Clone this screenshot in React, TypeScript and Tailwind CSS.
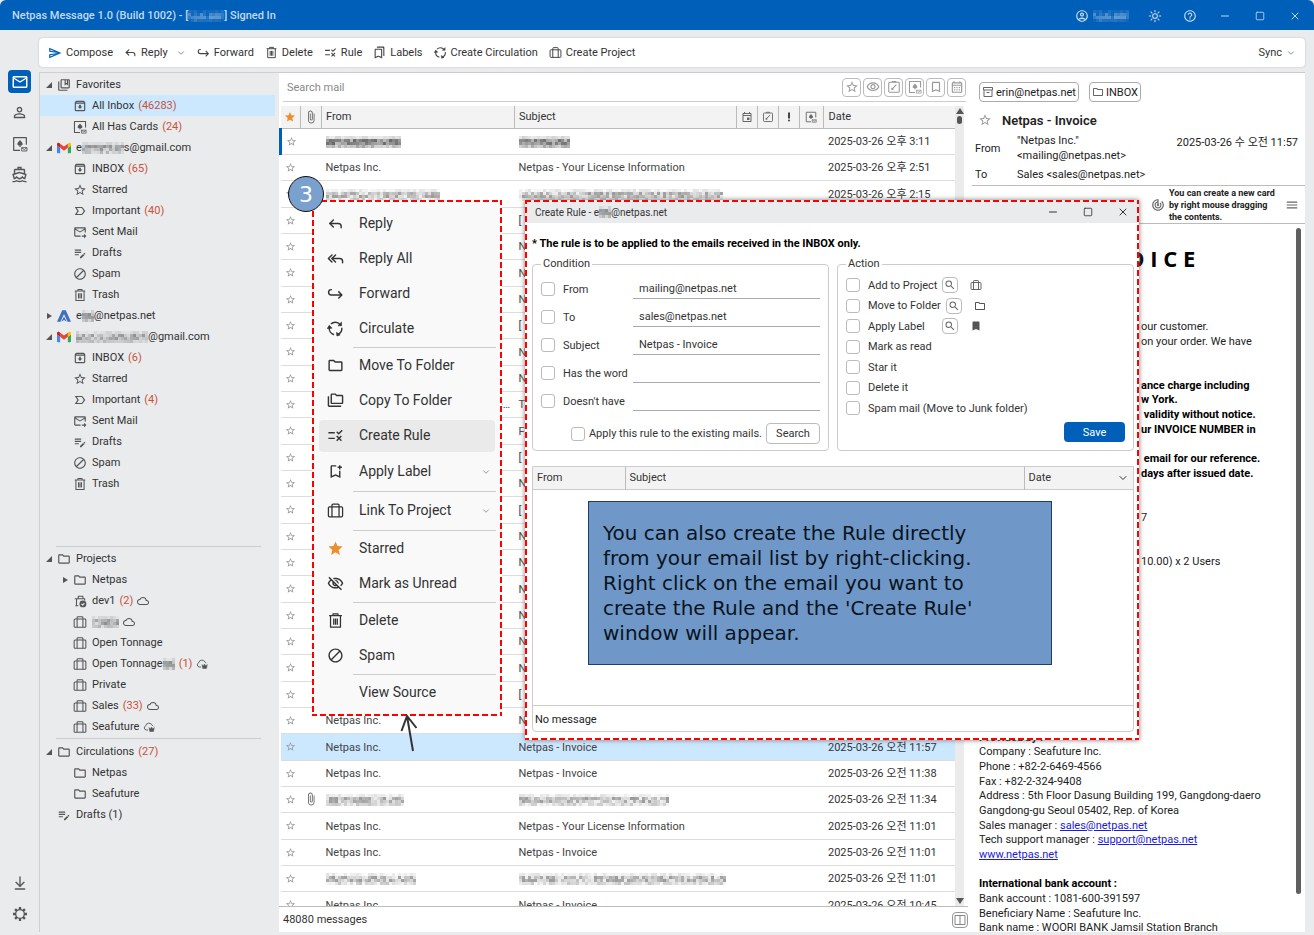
import React, { useState } from 'react';
import { ArrowDownToLine, ChevronDown, Minus, Reply, ReplyAll, Square, X } from 'lucide-react';
import {
    MdAttachFile,
    MdBlock,
    MdBookmark,
    MdBookmarkBorder,
    MdCloudQueue,
    MdHelpOutline,
    MdLabelImportantOutline,
    MdMenu,
    MdOutlineAccountCircle,
    MdOutlineArchive,
    MdOutlineBookmarkAdd,
    MdOutlineBookmarks,
    MdOutlineCalendarMonth,
    MdOutlineCollectionsBookmark,
    MdOutlineDirectionsBoat,
    MdOutlineEditNote,
    MdOutlineEvent,
    MdOutlineFolder,
    MdOutlineFolderCopy,
    MdOutlineForwardToInbox,
    MdOutlineInventory2,
    MdOutlineMail,
    MdOutlineSend,
    MdOutlineVisibility,
    MdOutlineVisibilityOff,
    MdPersonOutline,
    MdPriorityHigh,
    MdRule,
    MdSearch,
    MdStar,
    MdStarBorder,
    MdTrackChanges,
} from 'react-icons/md';

type IconType = React.ComponentType<{ className?: string }>;

/* ---------- Icons ---------- */

const stroke = {
    viewBox: '0 0 24 24',
    fill: 'none',
    stroke: 'currentColor',
    strokeWidth: 1.8,
    strokeLinejoin: 'round' as const,
};

const HookRight: IconType = ({ className }) => (
    <svg {...stroke} strokeWidth={2} className={className}>
        <path d="M7 6.500H6a3.700 3.700 0 0 0 0 7.500h15M16 9l5 5-5 5" />
    </svg>
);

const Suitcase: IconType = ({ className }) => (
    <svg {...stroke} className={className}>
        <rect x="2" y="7" width="20" height="14" rx="1.500" />
        <path d="M7 21V4.500A1.500 1.500 0 0 1 8.500 3h7A1.500 1.500 0 0 1 17 4.500V21" />
    </svg>
);

const SuitcaseCheck: IconType = ({ className }) => (
    <svg {...stroke} className={className}>
        <path d="M9 20H4M6 20V8h-3M6 8h14v3M9 8V4h8v4" />
        <circle cx="17" cy="17" r="5" fill="currentColor" />
        <path d="M14.500 17l2 2 3-3.500" stroke="#e9ebed" />
    </svg>
);

const TrashCan: IconType = ({ className }) => (
    <svg {...stroke} className={className}>
        <path d="M3 5h18M8.500 5V2.500h7V5M5 5v16.500h14V5M9.500 9v9M12 9v9M14.500 9v9" />
    </svg>
);

const CardIcon: IconType = ({ className }) => (
    <svg {...stroke} className={className}>
        <path d="M12 21.500H2.500v-19h19V13" />
        <path
            d="M12 6c1.500 2.500 4 3.500 4 6a2.200 2.200 0 0 1-3.400 1.800L13.500 16h-3l.9-2.200A2.200 2.200 0 0 1 8 12c0-2.500 2.500-3.500 4-6z"
            fill="currentColor"
            stroke="none"
        />
        <path d="M14.500 17.500h8v5h-8zM14.500 17.500l4 3 4-3" strokeWidth="1.300" />
    </svg>
);

const Circulate: IconType = ({ className }) => (
    <svg {...stroke} strokeWidth={2} className={className}>
        <path d="M5.500 5.800a9 9 0 0 1 13 .4M20.900 11a9 9 0 0 1-5.400 9.300M10 20.800A9 9 0 0 1 3.200 11" />
        <path d="M20.500 3v5h-5zM13.500 17.500l.5 5 4.500-1.500zM.5 12l2.700-4.500L7 11.500z" fill="currentColor" strokeWidth="1" />
    </svg>
);

const TaskIcon: IconType = ({ className }) => (
    <svg {...stroke} className={className}>
        <rect x="3" y="4" width="18" height="17" rx="1.500" />
        <path d="M9 4V2.500h6V4M8 16.500l8-8.500M8 16.500l.5-3M8 16.500l3-.5" />
    </svg>
);

const CloudCrown: IconType = ({ className }) => (
    <svg {...stroke} className={className}>
        <path d="M10 18H6a4.500 4.500 0 0 1-.5-8.500A6.500 6.500 0 0 1 18 8.500c1 .2 2 .8 2.500 1.500" />
        <path d="M12 13l3 3 2-4 2.500 4 3-3-1.500 8h-7.500z" fill="currentColor" strokeWidth="1" />
    </svg>
);

const Gear: IconType = ({ className }) => (
    <svg {...stroke} strokeWidth={2} className={className}>
        <circle cx="12" cy="12" r="6.500" />
        <path
            d="M12 5.500V1.500M12 22.500v-4M5.500 12h-4M22.500 12h-4M7.400 7.400L4.600 4.600M19.400 19.400l-2.800-2.800M7.400 16.600l-2.800 2.800M19.400 4.600l-2.800 2.800"
            strokeWidth="3.500"
        />
    </svg>
);

const Sun: IconType = ({ className }) => (
    <svg {...stroke} className={className}>
        <circle cx="12" cy="12" r="4" />
        <path d="M12 1.500v4M12 18.500v4M1.500 12h4M18.500 12h4M4.600 4.600l2.800 2.800M16.600 16.600l2.800 2.800M4.600 19.400l2.800-2.800M16.600 7.400l2.800-2.800" />
    </svg>
);

const GmailLogo: IconType = ({ className }) => (
    <svg viewBox="0 0 24 18" className={className}>
        <path d="M1.600 18h3.800V8.700L0 4.600v11.800C0 17.300.7 18 1.600 18z" fill="#4285f4" />
        <path d="M18.600 18h3.800c.9 0 1.600-.7 1.600-1.600V4.600l-5.400 4.100z" fill="#34a853" />
        <path d="M18.600 1.600v7.100L24 4.600V2.500c0-2-2.300-3.200-3.900-2z" fill="#fbbc04" />
        <path d="M5.400 8.700V1.600L12 6.600l6.600-5v7.100L12 13.700z" fill="#ea4335" />
        <path d="M0 2.500v2.100l5.400 4.100V1.600L3.900.5C2.300-.7 0 .4 0 2.500z" fill="#c5221f" />
    </svg>
);

const NetpasLogo: IconType = ({ className }) => (
    <svg viewBox="0 0 24 20" className={className}>
        <path d="M9 0h6l9 20h-6L12 6.500 6 20H0z" fill="#3f6fc0" />
        <path d="M12 11l4.500 9L12 17l-4.500 3z" fill="#3f6fc0" />
    </svg>
);

const Triangle: React.FC<{ open: boolean }> = ({ open }) => (
    <svg viewBox="0 0 8 8" className="size-2 shrink-0 text-[#555]">
        <path d={open ? 'M7 1v6H1z' : 'M2 1l5 3-5 3z'} fill="currentColor" />
    </svg>
);

// Pixelated block that stands in for private text
const Mosaic: React.FC<{ width: number; dark?: boolean; light?: boolean }> = ({ width, dark, light }) => {
    const base = dark ? 0.45 : light ? 0.2 : 0.22;
    const cells = [];
    for (let x = 0; x < width; x += 3) {
        for (let y = 0; y < 4; y++) {
            const n = Math.abs(Math.sin(x * 12.9 + y * 78.2 + width) * 43758.5) % 1;
            const edge = y === 0 ? 0.3 : y === 3 ? 0.6 : 1;
            cells.push(
                <rect key={`${x}-${y}`} x={x} y={y * 3} width="3" height="3" opacity={(base + (n - 0.4) * 0.4) * edge} />
            );
        }
    }
    return (
        <svg width={width} height="12" className="inline-block shrink-0 align-middle" fill={light ? '#ffffff' : '#222222'}>
            {cells}
        </svg>
    );
};

// Red dashed marker drawn round a window
const Marker: React.FC = () => (
    <svg className="absolute inset-0 size-full pointer-events-none" fill="none">
        <rect width="100%" height="100%" stroke="#ff0000" strokeWidth="4" strokeDasharray="6 3" />
    </svg>
);

/* ---------- Title bar, toolbar and rail ---------- */

const TitleBar: React.FC = () => {
    const buttons: [string, IconType, string][] = [
        ['Theme', Sun, 'size-3.5'],
        ['Help', MdHelpOutline, 'size-3.5'],
        ['Minimize', Minus, 'size-3'],
        ['Maximize', Square, 'size-2.5'],
        ['Close', X, 'size-3'],
    ];
    return (
        <header className="flex h-[30px] shrink-0 items-center rounded-t-md bg-[#005fb8] pt-px pr-0.5 pl-3 text-[#c4d9ee]">
            <h1 className="flex flex-1 items-center font-medium">
                <span className="whitespace-pre">Netpas Message 1.0 (Build 1002) - [</span>
                <Mosaic width={36} light />
                <span className="whitespace-pre">] Signed In</span>
            </h1>
            <div className="mr-2 flex items-center gap-1">
                <MdOutlineAccountCircle className="size-3.5" />
                <Mosaic width={36} light />
            </div>
            {buttons.map(([label, Icon, size]) => (
                <button key={label} aria-label={label} className="flex h-full w-[35px] items-center justify-center">
                    <Icon className={size} />
                </button>
            ))}
        </header>
    );
};

const Toolbar: React.FC = () => {
    const actions: [string, IconType][] = [
        ['Compose', MdOutlineSend],
        ['Reply', Reply],
        ['Forward', HookRight],
        ['Delete', TrashCan],
        ['Rule', MdRule],
        ['Labels', MdOutlineBookmarks],
        ['Create Circulation', Circulate],
        ['Create Project', Suitcase],
    ];
    return (
        <div className="mt-2 flex h-[29px] shrink-0 items-center gap-[11px] rounded-sm bg-white px-[9px] shadow-[0_0_2px_#bbb]">
            {actions.map(([label, Icon]) => (
                <button key={label} className="flex items-center gap-1 whitespace-nowrap">
                    <Icon className={label === 'Compose' ? 'size-3.5 text-[#005fb8]' : 'size-[13px] text-[#444]'} />
                    {label}
                    {label === 'Reply' && <ChevronDown className="ml-1 size-2.5 text-[#777]" />}
                </button>
            ))}
            <button className="ml-auto flex items-center gap-1">
                Sync <ChevronDown className="size-2.5 text-[#777]" />
            </button>
        </div>
    );
};

const Rail: React.FC = () => (
    <nav className="flex w-[39px] shrink-0 flex-col items-center pt-9 pb-[3px] text-[#555]">
        <button aria-label="Mail" className="my-1 flex size-[23px] items-center justify-center rounded bg-[#005fb8] text-white">
            <MdOutlineMail className="size-[18px]" />
        </button>
        <button aria-label="Contacts" className="flex h-[31px] items-center">
            <MdPersonOutline className="size-[17px]" />
        </button>
        <button aria-label="Cards" className="flex h-[31px] items-center">
            <CardIcon className="size-4" />
        </button>
        <button aria-label="Vessels" className="flex h-[31px] items-center">
            <MdOutlineDirectionsBoat className="size-[17px]" />
        </button>
        <button aria-label="Download" className="mt-auto flex h-[31px] items-center">
            <ArrowDownToLine className="size-4" />
        </button>
        <button aria-label="Settings" className="flex h-[31px] items-center">
            <Gear className="size-4" />
        </button>
    </nav>
);

/* ---------- Folder tree ---------- */

interface TreeItem {
    label?: string;
    hidden?: number;
    tail?: string;
    icon: IconType;
    count?: string;
    open?: boolean;
    child?: boolean;
    after?: IconType;
    selected?: boolean;
}

const mailbox = (inbox: string, important: string): TreeItem[] => [
    { label: 'INBOX', icon: MdOutlineArchive, count: inbox, child: true },
    { label: 'Starred', icon: MdStarBorder, child: true },
    { label: 'Important', icon: MdLabelImportantOutline, count: important, child: true },
    { label: 'Sent Mail', icon: MdOutlineForwardToInbox, child: true },
    { label: 'Drafts', icon: MdOutlineEditNote, child: true },
    { label: 'Spam', icon: MdBlock, child: true },
    { label: 'Trash', icon: TrashCan, child: true },
];

const accounts: TreeItem[] = [
    { label: 'Favorites', icon: MdOutlineCollectionsBookmark, open: true },
    { label: 'All Inbox', icon: MdOutlineArchive, count: '46283', child: true, selected: true },
    { label: 'All Has Cards', icon: CardIcon, count: '24', child: true },
    { label: 'e', hidden: 42, tail: 's@gmail.com', icon: GmailLogo, open: true },
    ...mailbox('65', '40'),
    { label: 'e', hidden: 12, tail: '@netpas.net', icon: NetpasLogo, open: false },
    { hidden: 72, tail: '@gmail.com', icon: GmailLogo, open: true },
    ...mailbox('6', '4'),
];

const projects: TreeItem[] = [
    { label: 'Projects', icon: MdOutlineFolder, open: true },
    { label: 'Netpas', icon: MdOutlineFolder, child: true, open: false },
    { label: 'dev1', icon: SuitcaseCheck, count: '2', child: true, after: MdCloudQueue },
    { hidden: 27, icon: Suitcase, child: true, after: MdCloudQueue },
    { label: 'Open Tonnage', icon: Suitcase, child: true },
    { label: 'Open Tonnage', hidden: 12, icon: Suitcase, count: '1', child: true, after: CloudCrown },
    { label: 'Private', icon: Suitcase, child: true },
    { label: 'Sales', icon: Suitcase, count: '33', child: true, after: MdCloudQueue },
    { label: 'Seafuture', icon: Suitcase, child: true, after: CloudCrown },
];

const circulations: TreeItem[] = [
    { label: 'Circulations', icon: MdOutlineFolder, count: '27', open: true },
    { label: 'Netpas', icon: MdOutlineFolder, child: true },
    { label: 'Seafuture', icon: MdOutlineFolder, child: true },
    { label: 'Drafts (1)', icon: MdOutlineEditNote },
];

const Tree: React.FC<{ items: TreeItem[] }> = ({ items }) => (
    <ul>
        {items.map((item, i) => {
            const Icon = item.icon;
            const After = item.after;
            return (
                <li key={i} className={item.selected ? 'mr-1 bg-[#cce8ff]' : 'mr-1'}>
                    <button className={`flex h-[21px] w-full items-center whitespace-nowrap ${item.child ? 'pl-[21px]' : 'pl-[5px]'}`}>
                        {item.open === undefined ? <span className="w-2" /> : <Triangle open={item.open} />}
                        <Icon className="mr-[5px] ml-1 size-3.5 shrink-0 text-[#555]" />
                        {item.label}
                        {item.hidden && <Mosaic width={item.hidden} />}
                        {item.tail}
                        {item.count && <span className="ml-1 text-[#c9523a]">({item.count})</span>}
                        {After && <After className="ml-1 size-3 text-[#555]" />}
                    </button>
                </li>
            );
        })}
    </ul>
);

const Sidebar: React.FC = () => (
    <aside className="w-60 shrink-0 overflow-hidden border-t border-l border-[#cfcfcf] pt-px">
        <Tree items={accounts} />
        <hr className="mt-[52px] mr-[18px] mb-px ml-4 border-[#ccc]" />
        <Tree items={projects} />
        <hr className="mt-px mr-[18px] mb-0.5 ml-4 border-[#ccc]" />
        <Tree items={circulations} />
    </aside>
);

/* ---------- Message list ---------- */

interface Mail {
    from: string | number;
    subject: string | number;
    time?: string;
    clip?: boolean;
    unread?: boolean;
}

const inc = 'Netpas Inc.';
const invoice = 'Netpas - Invoice';
const license = 'Netpas - Your License Information';

// Rows that lie under the menu and the rule window
const covered: Mail[] = ['[', 'N', 'N', 'N', '[', 'N', 'N', 'T', 'F', '[', 'N', '[', 'N', 'N', 'N', 'N', 'N', 'N', '['].map((c) => ({
    from: c === 'T' ? 'Technical Support Desk - Netpas Message' : '',
    subject: c,
}));

const mails: Mail[] = [
    { from: 75, subject: 51, time: '오후 3:11', unread: true },
    { from: inc, subject: license, time: '오후 2:51' },
    { from: 114, subject: 204, time: '오후 2:15' },
    ...covered,
    { from: inc, subject: 'N' },
    { from: inc, subject: invoice, time: '오전 11:57' },
    { from: inc, subject: invoice, time: '오전 11:38' },
    { from: 78, subject: 150, time: '오전 11:34', clip: true },
    { from: inc, subject: license, time: '오전 11:01' },
    { from: inc, subject: invoice, time: '오전 11:01' },
    { from: 90, subject: 207, time: '오전 11:01' },
    { from: inc, subject: invoice, time: '오전 10:45' },
];

const MailList: React.FC = () => {
    const [selected, setSelected] = useState(23);
    const filters: [string, IconType][] = [
        ['Starred', MdStarBorder],
        ['Unread', MdOutlineVisibility],
        ['Tasks', TaskIcon],
        ['Cards', CardIcon],
        ['Labels', MdBookmarkBorder],
        ['Calendar', MdOutlineCalendarMonth],
    ];
    const text = (v: string | number, dark?: boolean) => (typeof v === 'number' ? <Mosaic width={v} dark={dark} /> : v);
    return (
        <section className="flex min-w-0 flex-1 flex-col">
            <div className="mr-0.5 ml-1 flex h-[29px] shrink-0 items-center gap-0.5 border-b border-[#ccc]">
                <input
                    aria-label="Search mail"
                    placeholder="Search mail"
                    className="min-w-0 flex-1 px-1 outline-none placeholder:text-[#888]"
                />
                {filters.map(([label, Icon]) => (
                    <button
                        key={label}
                        aria-label={label}
                        className="flex size-[19px] items-center justify-center rounded-sm border border-[#bbb] text-[#999]"
                    >
                        <Icon className="size-3.5" />
                    </button>
                ))}
            </div>
            <div className="mt-1 flex min-h-0 flex-1 border-b border-[#bbb]">
                <div className="min-w-0 flex-1 overflow-hidden">
                    <table className="w-full table-fixed border-collapse text-[#444]">
                        <colgroup>
                            <col className="w-5" />
                            <col className="w-[21px]" />
                            <col className="w-[193px]" />
                            <col />
                            <col className="w-[21px]" />
                            <col className="w-[21px]" />
                            <col className="w-[21px]" />
                            <col className="w-6" />
                            <col className="w-[132px]" />
                        </colgroup>
                        <thead>
                            <tr className="h-[22px] border-b border-[#bbb] bg-[#f3f3f3] text-left text-[#333] *:border-r *:border-[#bbb] *:p-0 *:font-normal">
                                <th><MdStar className="mx-auto size-3 text-[#ec8f2d]" /></th>
                                <th><MdAttachFile className="mx-auto size-3.5 text-[#666]" /></th>
                                <th><span className="pl-1">From</span></th>
                                <th><span className="pl-1">Subject</span></th>
                                <th><MdOutlineEvent className="mx-auto size-3 text-[#666]" /></th>
                                <th><TaskIcon className="mx-auto size-3 text-[#666]" /></th>
                                <th><MdPriorityHigh className="mx-auto size-3 text-[#444]" /></th>
                                <th><CardIcon className="mx-auto size-3 text-[#666]" /></th>
                                <th className="!border-r-0"><span className="pl-[5px]">Date</span></th>
                            </tr>
                        </thead>
                        <tbody>
                            {mails.map((mail, i) => (
                                <tr
                                    key={i}
                                    onClick={() => setSelected(i)}
                                    className={`h-[26px] border-b border-[#ddd] *:p-0 nth-[3n]:h-[27px] ${i === selected ? 'bg-[#cce8ff]' : ''}`}
                                >
                                    <td className={mail.unread ? 'border-l-3 border-l-[#005fb8]' : ''}>
                                        <MdStarBorder className="mx-auto size-[11px] text-[#999]" />
                                    </td>
                                    <td>{mail.clip && <MdAttachFile className="mx-auto size-3.5 text-[#666]" />}</td>
                                    <td><div className="truncate px-1 pt-px">{text(mail.from, mail.unread)}</div></td>
                                    <td><div className="truncate px-1 pt-px">{text(mail.subject, mail.unread)}</div></td>
                                    <td colSpan={4} />
                                    <td className="text-[#333]">
                                        {mail.time && <div className="px-[5px] pt-px whitespace-nowrap">2025-03-26 {mail.time}</div>}
                                    </td>
                                </tr>
                            ))}
                        </tbody>
                    </table>
                </div>
                <div className="flex w-[9px] flex-col items-center bg-[#ebebeb] py-0.5 text-[#555]">
                    <svg viewBox="0 0 8 6" className="h-1.5 w-2"><path d="M4 0l4 6H0z" fill="currentColor" /></svg>
                    <span className="mt-0.5 h-2 w-[5px] rounded-sm bg-[#555]" />
                    <svg viewBox="0 0 8 6" className="mt-auto h-1.5 w-2"><path d="M4 6L0 0h8z" fill="currentColor" /></svg>
                </div>
                <div className="w-1" />
            </div>
            <footer className="flex h-[25px] shrink-0 items-center justify-between pl-1 text-[#333]">
                48080 messages
                <button aria-label="Toggle reading pane" className="flex size-4 items-center justify-center rounded-sm border border-[#999] text-[#777]">
                    <svg {...stroke} className="size-3"><path d="M2 3h20v18H2zM12 3v18" /></svg>
                </button>
            </footer>
        </section>
    );
};

/* ---------- Reading pane ---------- */

const link = 'text-[#1a1ae0] underline';

// The dialog hides the left part of the upper lines
const Tail: React.FC<{ bold?: boolean; children: React.ReactNode }> = ({ bold, children }) => (
    <span className={bold ? 'pl-[162px] font-bold text-black' : 'pl-[162px]'}>{children}</span>
);

const bodyLines: React.ReactNode[] = [
    <Tail>our customer.</Tail>,
    <Tail>on your order. We have</Tail>,
    null,
    null,
    <Tail bold>ance charge including</Tail>,
    <Tail bold>w York.</Tail>,
    <Tail bold>&nbsp;validity without notice.</Tail>,
    <Tail bold>ur INVOICE NUMBER in</Tail>,
    null,
    <Tail bold>&nbsp;email for our reference.</Tail>,
    <Tail bold>days after issued date.</Tail>,
    null,
    null,
    <Tail>7</Tail>,
    null,
    null,
    <Tail>10.00) x 2 Users</Tail>,
    ...Array(11).fill(null),
    <b className="text-black">Provided by :</b>,
    'Company : Seafuture Inc.',
    'Phone : +82-2-6469-4566',
    'Fax : +82-2-324-9408',
    'Address : 5th Floor Dasung Building 199, Gangdong-daero',
    'Gangdong-gu Seoul 05402, Rep. of Korea',
    <>Sales manager : <a href="#sales" className={link}>sales@netpas.net</a></>,
    <>Tech support manager : <a href="#support" className={link}>support@netpas.net</a></>,
    <a href="#home" className={link}>www.netpas.net</a>,
    null,
    <b className="text-black">International bank account :</b>,
    'Bank account : 1081-600-391597',
    'Beneficiary Name : Seafuture Inc.',
    'Bank name : WOORI BANK Jamsil Station Branch',
];

const ReadingPane: React.FC = () => (
    <article className="flex w-[337px] shrink-0 flex-col pt-[9px] text-[#222]">
        <div className="flex gap-2.5 pl-[11px]">
            <button className="flex h-5 items-center gap-0.5 rounded-sm border border-[#aaa] px-0.5">
                <MdOutlineInventory2 className="size-3 text-[#666]" /> erin@netpas.net
            </button>
            <button className="flex h-5 items-center gap-0.5 rounded-sm border border-[#aaa] px-0.5">
                <MdOutlineFolder className="size-3 text-[#666]" /> INBOX
            </button>
        </div>
        <h2 className="mt-2 flex h-5 items-center gap-2.5 pl-2.5 text-[13px] font-semibold">
            <MdStarBorder className="size-3.5 text-[#999]" /> Netpas - Invoice
        </h2>
        <dl className="mt-0.5 grid grid-cols-[42px_1fr_auto] items-center pt-px pr-[7px] pl-[7px] leading-[15px]">
            <dt>From</dt>
            <dd>
                "Netpas Inc."
                <br />
                &lt;mailing@netpas.net&gt;
            </dd>
            <dd className="self-start pt-0.5">2025-03-26 수 오전 11:57</dd>
            <dt className="mt-1">To</dt>
            <dd className="col-span-2 mt-1">Sales &lt;sales@netpas.net&gt;</dd>
        </dl>
        <div className="mt-[3px] ml-1 flex h-[39px] shrink-0 items-center justify-end gap-1 border-y border-[#bbb] pr-1.5">
            <MdTrackChanges className="size-3.5 text-[#666]" />
            <p className="w-[112px] text-[9px] leading-3 font-bold whitespace-nowrap">
                You can create a new card
                <br />
                by right mouse dragging
                <br />
                the contents.
            </p>
            <button aria-label="Menu"><MdMenu className="size-3.5 text-[#666]" /></button>
        </div>
        <div className="flex min-h-0 flex-1 justify-between pr-1">
            <div className="min-w-0 flex-1 overflow-hidden pl-[11px]">
                <h3 className="mt-[18px] mb-[45px] pl-[148px] font-['Open_Sans',sans-serif] text-[22px] leading-8 font-bold text-black">O I C E</h3>
                {bodyLines.map((line, i) => (
                    <p key={i} className="h-[15px] leading-[15px] whitespace-nowrap nth-[3n]:h-[14px]">{line}</p>
                ))}
            </div>
            <div className="mt-1 mb-[38px] w-[5px] rounded bg-[#5f5f5f]" />
        </div>
    </article>
);

/* ---------- Context menu ---------- */

const menuGroups: [string, IconType | null][][] = [
    [['Reply', Reply], ['Reply All', ReplyAll], ['Forward', HookRight], ['Circulate', Circulate]],
    [['Move To Folder', MdOutlineFolder], ['Copy To Folder', MdOutlineFolderCopy], ['Create Rule', MdRule], ['Apply Label', MdOutlineBookmarkAdd]],
    [['Link To Project', Suitcase]],
    [['Starred', MdStar], ['Mark as Unread', MdOutlineVisibilityOff]],
    [['Delete', TrashCan], ['Spam', MdBlock]],
    [['View Source', null]],
];

const ContextMenu: React.FC = () => (
    <div className="absolute top-[200px] left-[312px] h-[516px] w-[190px] bg-[#f9f9f9] pt-1.5 text-[14px] text-[#333]">
        {menuGroups.map((group, g) => (
            <div key={g}>
                {g > 0 && <hr className="mt-px mr-1.5 ml-[41px] border-[#ccc]" />}
                {group.map(([label, Icon]) => {
                    const sub = label === 'Apply Label' || label === 'Link To Project';
                    return (
                        <div key={label} className={sub ? 'flex h-[37px] items-center px-[7px]' : 'flex h-[35px] items-center px-[7px]'}>
                            <button className={`flex h-8 w-full items-center gap-[15px] rounded pl-2 ${label === 'Create Rule' ? 'bg-[#eaeaea]' : ''}`}>
                                {Icon ? (
                                    <Icon className={label === 'Starred' ? 'size-[17px] text-[#ec8f2d]' : 'size-[17px]'} />
                                ) : (
                                    <span className="w-[17px]" />
                                )}
                                {label}
                                {sub && <ChevronDown className="mr-1 ml-auto size-2.5 text-[#888]" />}
                            </button>
                        </div>
                    );
                })}
            </div>
        ))}
        <Marker />
    </div>
);

/* ---------- Create rule window ---------- */

const box = 'size-3.5 shrink-0 appearance-none rounded-[3px] border border-[#bbb] bg-white checked:bg-[#005fb8]';

const RuleDialog: React.FC = () => {
    const conditions = [
        ['From', 'mailing@netpas.net'],
        ['To', 'sales@netpas.net'],
        ['Subject', 'Netpas - Invoice'],
        ['Has the word', ''],
        ["Doesn't have", ''],
    ];
    const actions: [string, IconType | null][] = [
        ['Add to Project', Suitcase],
        ['Move to Folder', MdOutlineFolder],
        ['Apply Label', MdBookmark],
        ['Mark as read', null],
        ['Star it', null],
        ['Delete it', null],
        ['Spam mail (Move to Junk folder)', null],
    ];
    return (
        <div role="dialog" aria-label="Create Rule" className="absolute top-[200px] left-[525px] flex h-[540px] w-[614px] flex-col bg-white pb-2 text-[#333] shadow-[0_0_5px_#777]">
            <div className="flex h-[23px] shrink-0 items-center gap-6 bg-[#e9ebed] pt-px pr-2.5 pl-2.5">
                <span className="mr-auto flex items-center text-[10px] whitespace-pre">
                    Create Rule - e<Mosaic width={12} />@netpas.net
                </span>
                <button aria-label="Minimize"><Minus className="size-3" /></button>
                <button aria-label="Maximize"><Square className="size-2.5" /></button>
                <button aria-label="Close"><X className="size-3" /></button>
            </div>
            <p className="mt-3 pl-[7px] leading-[18px] font-bold text-black">* The rule is to be applied to the emails received in the INBOX only.</p>
            <div className="mt-0.5 grid grid-cols-2 gap-2 pr-[5px] pl-[7px]">
                <fieldset className="h-[196px] min-w-0 rounded border border-[#ccc] pt-0.5 pr-2 pl-2">
                    <legend className="px-0.5 leading-[18px]">Condition</legend>
                    {conditions.map(([label, value]) => (
                        <div key={label} className="flex h-7 items-center">
                            <input type="checkbox" id={`use-${label}`} className={box} />
                            <label htmlFor={`use-${label}`} className="w-[78px] shrink-0 pl-2 whitespace-nowrap">{label}</label>
                            <input
                                aria-label={`${label} value`}
                                defaultValue={value}
                                className="h-5 min-w-0 flex-1 border-b border-[#aaa] pl-1.5 outline-none"
                            />
                        </div>
                    ))}
                    <div className="mt-2 flex items-center justify-end gap-1">
                        <input type="checkbox" id="existing" className={box} />
                        <label htmlFor="existing" className="whitespace-nowrap">Apply this rule to the existing mails.</label>
                        <button className="h-[21px] w-[54px] rounded-sm border border-[#bbb]">Search</button>
                    </div>
                </fieldset>
                <fieldset className="h-[196px] min-w-0 rounded border border-[#ccc] pt-0.5 pr-2 pl-2">
                    <legend className="px-0.5 leading-[18px]">Action</legend>
                    {actions.map(([label, Icon]) => (
                        <div key={label} className="flex h-[21px] items-center nth-[2n]:h-5">
                            <input type="checkbox" id={label} className={box} />
                            <label htmlFor={label} className="min-w-[82px] pr-[5px] pl-2 whitespace-nowrap">{label}</label>
                            {Icon && (
                                <>
                                    <button aria-label={`Find: ${label}`} className="flex size-4 items-center justify-center rounded-sm border border-[#bbb] text-[#666]">
                                        <MdSearch className="size-3" />
                                    </button>
                                    <Icon className="ml-3 size-3 text-[#555]" />
                                </>
                            )}
                        </div>
                    ))}
                    <button className="mt-1 ml-auto block h-5 w-[61px] rounded-sm bg-[#005fb8] text-white">Save</button>
                </fieldset>
            </div>
            <div className="mr-[5px] ml-[7px] mt-[15px] flex min-h-0 flex-1 flex-col rounded-b border border-[#ccc]">
                <table className="w-full table-fixed border-collapse">
                    <thead>
                        <tr className="h-[22px] border-b border-[#ccc] bg-[#f3f3f3] text-left *:px-1 *:font-normal">
                            <th className="w-[92px] border-r border-[#bbb]">From</th>
                            <th className="border-r border-[#bbb]">Subject</th>
                            <th className="w-[109px]">
                                <span className="flex items-center justify-between">Date <ChevronDown className="size-3" /></span>
                            </th>
                        </tr>
                    </thead>
                </table>
                <p className="mt-auto h-[26px] border-t border-[#ccc] px-0.5 leading-[27px] text-[#222]">No message</p>
            </div>
            <Marker />
        </div>
    );
};

const App: React.FC = () => (
    <div className="relative flex h-screen flex-col overflow-hidden bg-[#e9ebed] font-['Roboto','Noto_Sans_CJK_KR',sans-serif] text-[11px] leading-[17px] text-[#333]">
        <TitleBar />
        <div className="flex min-h-0 flex-1 pb-[3px]">
            <Rail />
            <div className="flex min-w-0 flex-1 flex-col pr-[9px]">
                <Toolbar />
                <main className="mt-[5px] flex min-h-0 flex-1">
                    <Sidebar />
                    <div className="flex min-w-0 flex-1 border-t border-[#ccc] bg-white">
                        <MailList />
                        <ReadingPane />
                    </div>
                </main>
            </div>
        </div>

        <ContextMenu />
        <RuleDialog />

        <div className="absolute top-[176px] left-[288px] flex size-9 items-center justify-center rounded-full border border-[#111] bg-[#7aa0ce] font-['DejaVu_Sans',sans-serif] text-[22px] text-white">
            3
        </div>
        <svg viewBox="0 0 18 38" className="absolute top-[714px] left-[400px] h-[38px] w-[18px]" fill="none" stroke="#333" strokeWidth="2">
            <path d="M13 37L7 2M1.500 17L7 2l9.500 12" />
        </svg>
        <p className="absolute top-[501px] left-[588px] h-[164px] w-[464px] border border-[#1f3f66] bg-[#6f98c9] py-[19px] pr-10 pl-3.5 font-['DejaVu_Sans',sans-serif] text-[20px] leading-[25px] text-[#0a1420]">
            You can also create the Rule directly from your email list by right-clicking. Right click on the email you want to create the Rule and the 'Create Rule' window will appear.
        </p>
    </div>
);

export default App;
